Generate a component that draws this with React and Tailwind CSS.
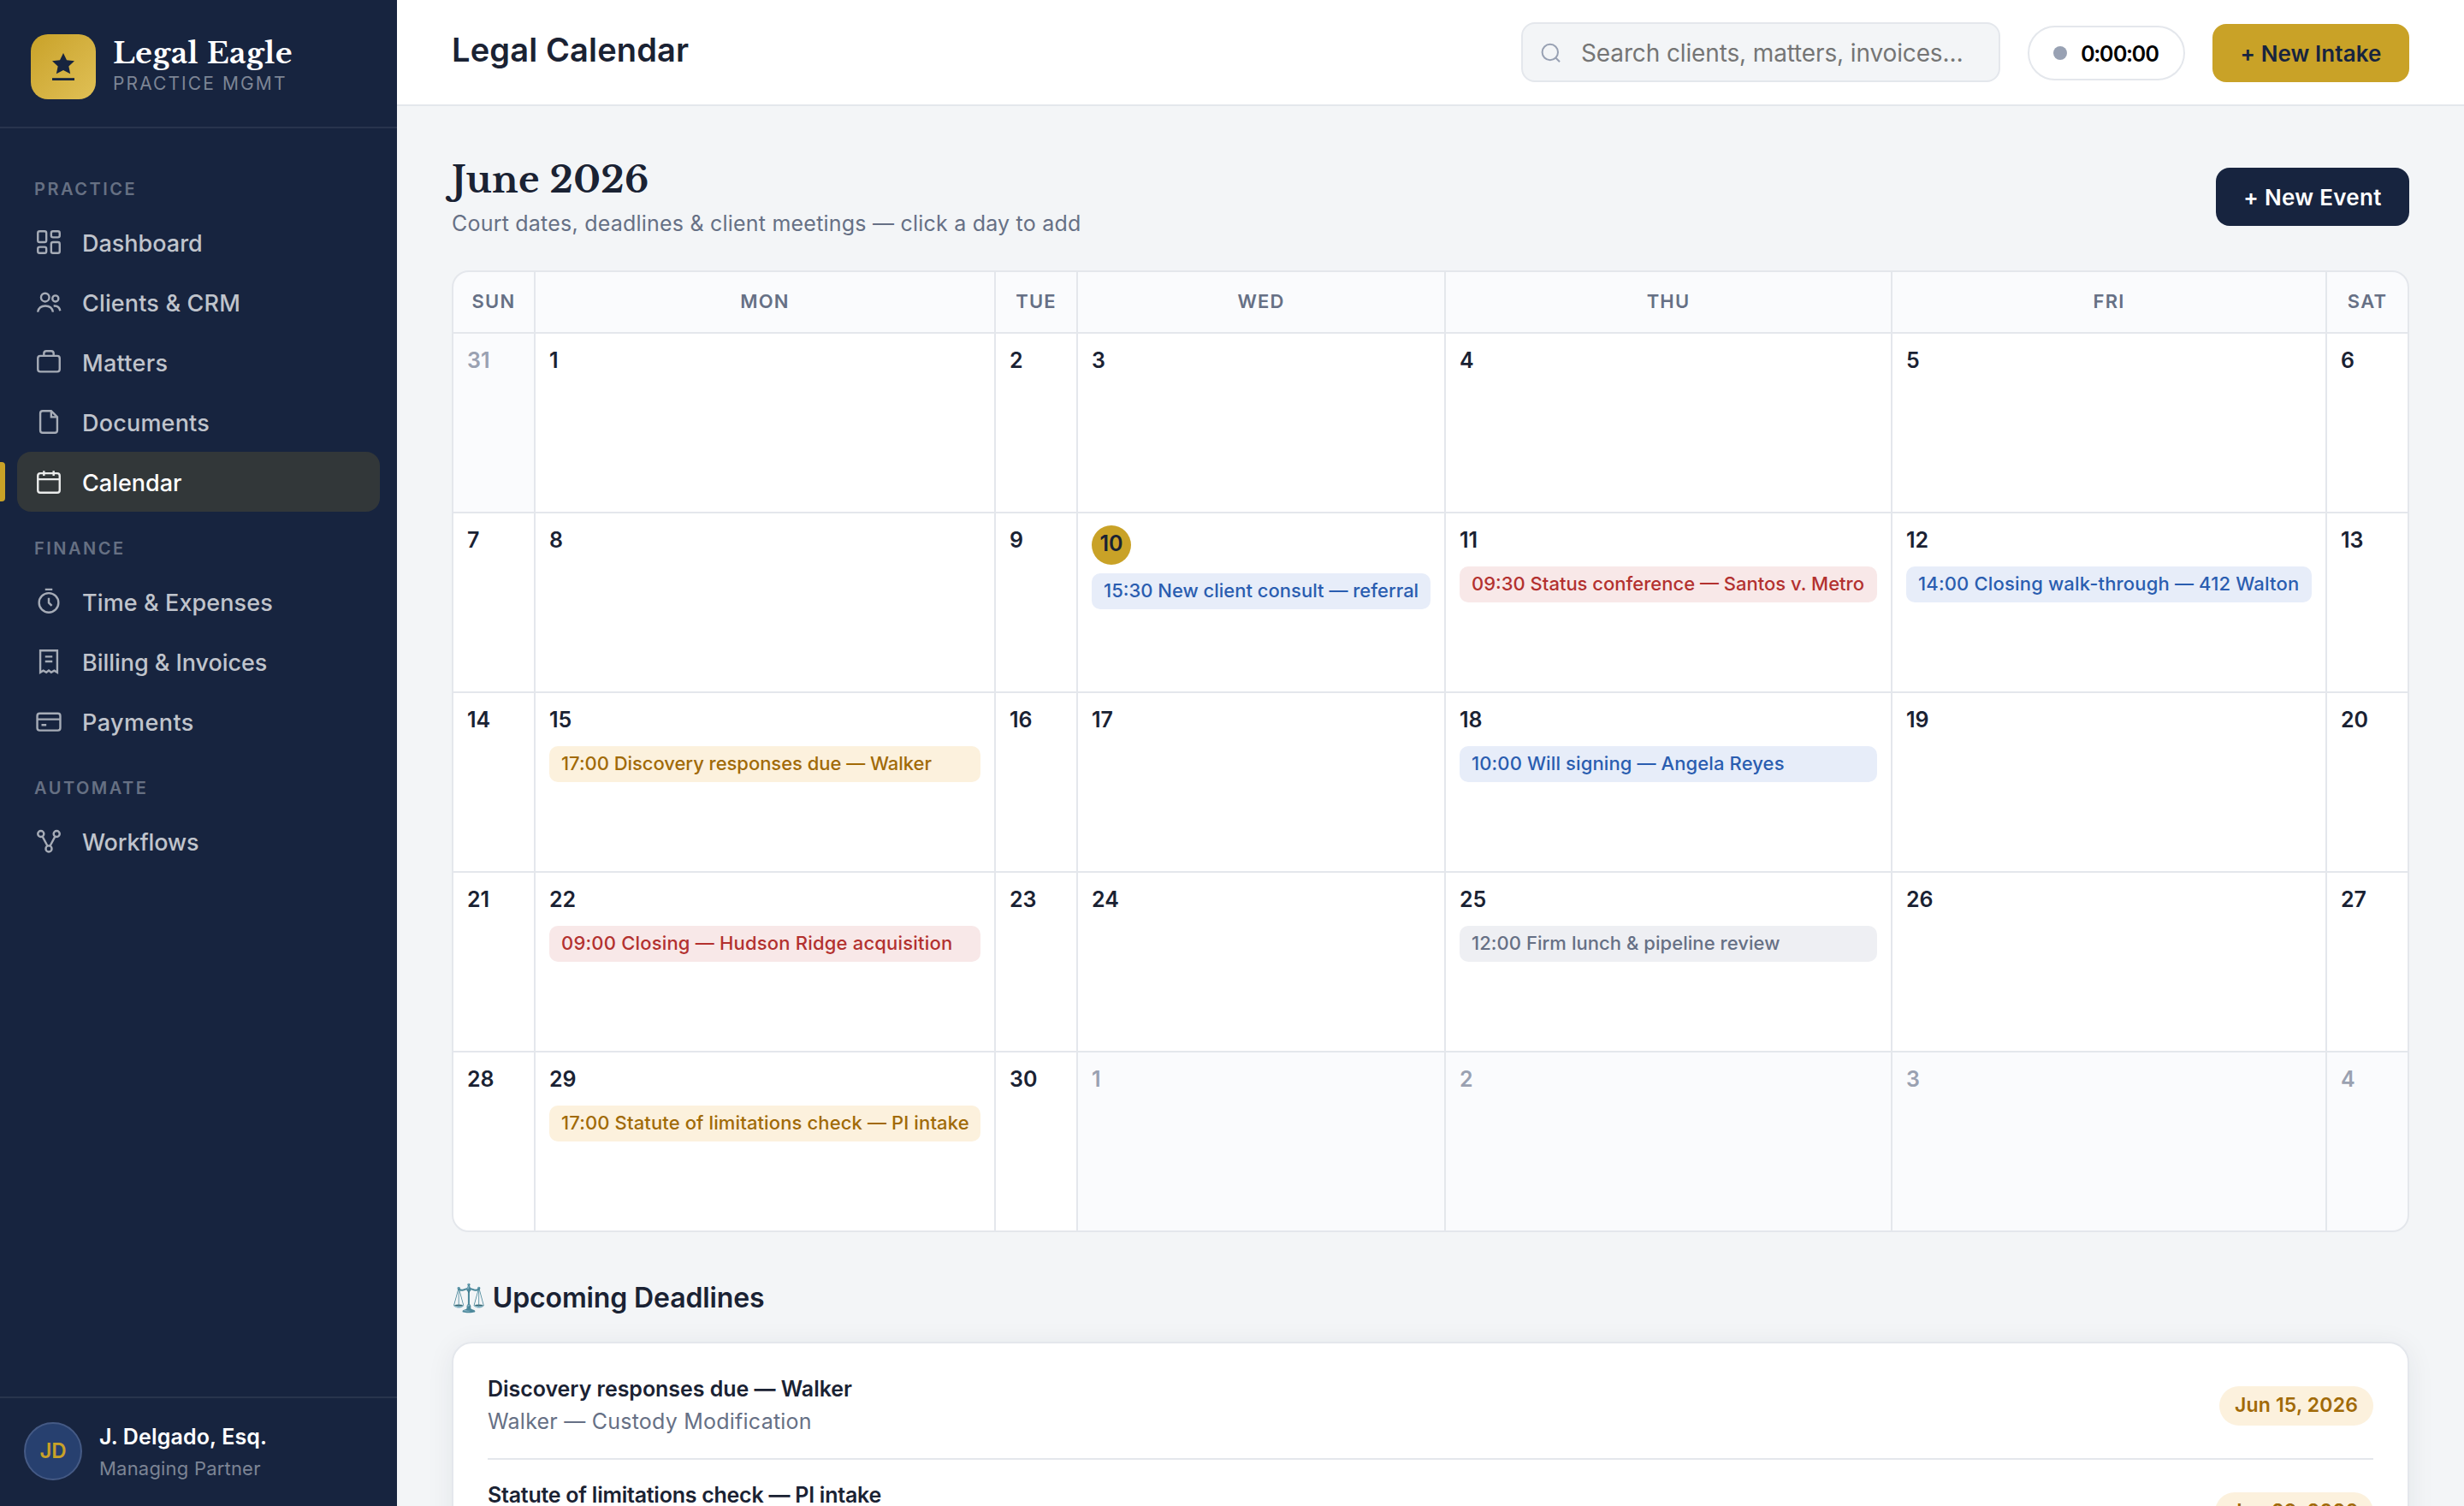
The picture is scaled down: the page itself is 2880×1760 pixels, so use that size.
import React from "react";

const INK = "text-[#1a2233]";

function NavIcon({ children, active }) {
  return (
    <svg
      viewBox="0 0 24 24"
      className={"size-[34px] shrink-0 " + (active ? "opacity-90" : "opacity-85")}
      fill="none"
      stroke="currentColor"
      strokeWidth="1.7"
    >
      {children}
    </svg>
  );
}

const icons = {
  dashboard: (
    <>
      <rect x="3" y="3" width="7" height="9" rx="1.5" />
      <rect x="14" y="3" width="7" height="5" rx="1.5" />
      <rect x="14" y="12" width="7" height="9" rx="1.5" />
      <rect x="3" y="16" width="7" height="5" rx="1.5" />
    </>
  ),
  clients: (
    <>
      <circle cx="9" cy="8.2" r="3.400" />
      <path d="M2.900 20.200c.6-3.200 3-5 6.300-5s5.700 1.800 6.300 5" />
      <circle cx="17.500" cy="9.100" r="2.500" />
      <path d="M16 15.200c2.900-.3 4.900 1.100 5.400 4" />
    </>
  ),
  matters: (
    <>
      <rect x="3" y="7" width="18" height="13" rx="2" />
      <path d="M8 7V5a2 2 0 0 1 2-2h4a2 2 0 0 1 2 2v2" />
    </>
  ),
  documents: (
    <>
      <path d="M14 3H7a2 2 0 0 0-2 2v14a2 2 0 0 0 2 2h10a2 2 0 0 0 2-2V8z" />
      <path d="M14 3v5h5" />
    </>
  ),
  calendar: (
    <>
      <rect x="3" y="5" width="18" height="16" rx="2" />
      <path d="M3 10h18M8 3v4M16 3v4" />
    </>
  ),
  time: (
    <>
      <circle cx="12" cy="13" r="8" />
      <path d="M12 9v4l2.500 2.500M9 2h6" />
    </>
  ),
  billing: (
    <path d="M5 3h14v18l-2.500-1.500L14 21l-2-1.500L10 21l-2.500-1.500L5 21zM9 8h6M9 12h6" />
  ),
  payments: (
    <>
      <rect x="2.500" y="5.500" width="19" height="14" rx="2" />
      <path d="M2.500 10.300h19M6 15h4" />
    </>
  ),
  workflows: (
    <>
      <circle cx="5.500" cy="6" r="2.500" />
      <circle cx="18.500" cy="6" r="2.500" />
      <circle cx="12" cy="18.300" r="2.500" />
      <path d="M6.800 8.200l4.100 7.700M17.200 8.200l-4.100 7.700" />
    </>
  ),
};

const nav = [
  {
    label: "Practice",
    tracking: "tracking-[2.500px]",
    items: [
      ["dashboard", "Dashboard", "tracking-[0px]"],
      ["clients", "Clients & CRM", "tracking-[0.150px]"],
      ["matters", "Matters", "tracking-[0.300px]"],
      ["documents", "Documents", "tracking-[0.200px]"],
      ["calendar", "Calendar", "tracking-[0px]"],
    ],
  },
  {
    label: "Finance",
    tracking: "tracking-[2.500px]",
    items: [
      ["time", "Time & Expenses", "tracking-[0.100px]"],
      ["billing", "Billing & Invoices", "tracking-[-0.050px]"],
      ["payments", "Payments", "tracking-[0.450px]"],
    ],
  },
  { label: "Automate", tracking: "tracking-[2.500px]", items: [["workflows", "Workflows", "tracking-[-0.150px]"]] },
];

function Sidebar() {
  return (
    <aside className="flex w-[464px] shrink-0 flex-col bg-[#17243f]">
      <div className="flex h-[150px] items-start gap-[20px] border-b-2 border-[#28344d] pt-[40px] pl-[36px]">
        <div className="flex size-[76px] items-center justify-center rounded-[20px] bg-linear-135 from-[#c9a227] to-[#e0c055]">
          <svg viewBox="0 0 24 24" className="size-[40px]" fill="#17243f">
            <path d="M12 2.400l2.400 5 5.400.6-4 3.700 1.100 5.200-4.900-2.500-4.900 2.500 1.100-5.200-4-3.700 5.400-.6z" />
            <rect x="4.200" y="19.900" width="15.600" height="1.700" />
          </svg>
        </div>
        <div className="flex flex-col">
          <div className="font-['Libre_Baskerville','Liberation_Serif',serif] text-[34px]/[44px] font-bold tracking-[0.450px] whitespace-nowrap text-white">Legal Eagle</div>
          <div className="text-[21px]/[28px] tracking-[2.100px] whitespace-nowrap text-[#7d8595]">PRACTICE MGMT</div>
        </div>
      </div>
      <nav className="flex flex-1 flex-col px-[20px] pt-[28px]">
        {nav.map(({ label, tracking: labelTracking, items }) => (
          <div key={label}>
            <div className={"h-[70px] pt-[28px] pl-[20px] text-[20px]/[30px] font-semibold text-[#667083] uppercase " + labelTracking}>{label}</div>
            {items.map(([icon, name, tracking]) => {
              const active = name === "Calendar";
              return (
                <div
                  key={name}
                  className={
                    "relative flex h-[70px] items-center gap-[22px] rounded-[16px] pl-[20px] text-[27px] font-medium " +
                    (active ? "bg-[#323739] text-white" : "text-[#c0c4cc]")
                  }
                >
                  {active && <span className="absolute top-[12px] -left-[20px] h-[46px] w-[6px] rounded-r-[4px] bg-[#c9a227]" />}
                  <NavIcon active={active}>{icons[icon]}</NavIcon>
                  <span className={"mt-[4px] " + tracking}>{name}</span>
                </div>
              );
            })}
          </div>
        ))}
      </nav>
      <div className="flex h-[128px] gap-[20px] border-t-2 border-[#28344d] pt-[26px] pl-[28px]">
        <div className="mt-[2px] flex size-[68px] items-center justify-center rounded-full border-2 border-[#455a85] bg-[#27406f] text-[24px] font-semibold text-[#c9a227]">JD</div>
        <div className="flex flex-col">
          <div className="text-[25px]/[38px] font-semibold tracking-[0.150px] text-white">J. Delgado, Esq.</div>
          <div className="text-[22px]/[36px] tracking-[0.200px] text-[#7d8595]">Managing Partner</div>
        </div>
      </div>
    </aside>
  );
}

function TopBar() {
  return (
    <header className="flex h-[124px] shrink-0 items-center justify-between border-b-2 border-[#e4e7ec] bg-white px-[64px]">
      <h1 className={"pb-[6px] text-[38px] font-semibold tracking-[0.150px] " + INK}>Legal Calendar</h1>
      <div className="flex items-center gap-[32px]">
        <div className="flex h-[70px] w-[560px] items-center gap-[22px] rounded-[16px] border-2 border-[#e4e7ec] bg-[#f3f5f7] pl-[18px] text-[28px] tracking-[-0.130px] text-[#757575]">
          <svg viewBox="0 0 28 28" className="size-[28px]" fill="none" stroke="#98a1b3" strokeWidth="2">
            <circle cx="13.800" cy="14" r="9.200" />
            <path d="M20.300 20.500l4.700 4.700" />
          </svg>
          <span className="mt-[2px]">Search clients, matters, invoices…</span>
        </div>
        <div className="mt-[2px] flex h-[64px] w-[184px] items-center gap-[16px] rounded-full border-2 border-[#e4e7ec] bg-white pl-[28px] text-[26px] font-semibold text-black tabular-nums">
          <span className="size-[16px] rounded-full bg-[#98a1b3]" />
          <span className="tracking-[-1px]">0:00:00</span>
        </div>
        <button className="mt-[2px] h-[68px] w-[230px] rounded-[16px] bg-[#c9a227] text-[26px] font-semibold tracking-[0.080px] text-[#17243f]">+ New Intake</button>
      </div>
    </header>
  );
}

const tones = {
  blue: "bg-[#e7edf9] text-[#2a5db0]",
  red: "bg-[#f8e8e8] text-[#b3312f]",
  amber: "bg-[#fcf1dd] text-[#a16a07]",
  gray: "bg-[#eeeff3] text-[#667085]",
};

const events = {
  10: ["blue", "15:30 New client consult — referral", "tracking-[0px]"],
  11: ["red", "09:30 Status conference — Santos v. Metro", "tracking-[0px]"],
  12: ["blue", "14:00 Closing walk-through — 412 Walton", "tracking-[0.170px]"],
  15: ["amber", "17:00 Discovery responses due — Walker", "tracking-[-0.040px]"],
  18: ["blue", "10:00 Will signing — Angela Reyes", "tracking-[0.110px]"],
  22: ["red", "09:00 Closing — Hudson Ridge acquisition", "tracking-[0.190px]"],
  25: ["gray", "12:00 Firm lunch & pipeline review", "tracking-[0.050px]"],
  29: ["amber", "17:00 Statute of limitations check — PI intake", "tracking-[0.120px]"],
};

const days = [
  { n: 31, out: true },
  ...Array.from({ length: 30 }, (_, i) => ({ n: i + 1 })),
  ...[1, 2, 3, 4].map((n) => ({ n, out: true })),
];

function Day({ n, out }) {
  const event = out ? null : events[n];
  const today = n === 10 && !out;
  return (
    <div className={"h-[208px] px-[16px] pt-[14px] text-[25px]/[34px] font-semibold " + (out ? "bg-[#fafbfd] text-[#9aa1b1]" : "bg-white " + INK)}>
      {today ? (
        <div className="mb-[10px] size-[46px] rounded-full bg-[#c9a227] pt-[4px] text-center">{n}</div>
      ) : (
        <div className="mb-[10px] h-[38px]">{n}</div>
      )}
      {event && (
        <div className={"h-[42px] rounded-[10px] px-[14px] text-[22px]/[41px] font-medium whitespace-nowrap " + tones[event[0]] + " " + event[2]}>{event[1]}</div>
      )}
    </div>
  );
}

function Calendar() {
  return (
    <div className="grid grid-cols-[94px_536px_94px_428px_520px_506px_94px] gap-[2px] overflow-hidden rounded-[20px] border-2 border-[#e4e7ec] bg-[#e4e7ec]">
      {["Sun", "Mon", "Tue", "Wed", "Thu", "Fri", "Sat"].map((d) => (
        <div key={d} className="h-[70px] bg-[#fafbfd] text-center text-[22px]/[68px] font-semibold tracking-[1.200px] text-[#667085] uppercase">{d}</div>
      ))}
      {days.map((d, i) => (
        <Day key={i} {...d} />
      ))}
    </div>
  );
}

const deadlines = [
  ["Discovery responses due — Walker", "Walker — Custody Modification", "Jun 15, 2026", "tracking-[-0.040px]"],
  ["Statute of limitations check — PI intake", "PI Intake", "Jun 29, 2026", "tracking-[-0.250px]"],
];

export default function App() {
  return (
    <div className="flex h-[1760px] w-[2880px] overflow-hidden bg-[#f3f5f7] font-['Inter',sans-serif]">
      <Sidebar />
      <div className="flex min-w-0 flex-1 flex-col">
        <TopBar />
        <main className="flex flex-col px-[64px]">
          <div className="flex h-[192px] items-start justify-between pt-[56px]">
            <div>
              <h2 className={"pt-[2px] font-['Libre_Baskerville','Liberation_Serif',serif] text-[42px]/[56px] font-bold tracking-[0.400px] " + INK}>June 2026</h2>
              <p className="mt-[3px] text-[25px]/[40px] tracking-[0.215px] text-[#667085]">Court dates, deadlines &amp; client meetings — click a day to add</p>
            </div>
            <button className="mt-[16px] h-[68px] w-[226px] rounded-[16px] bg-[#17243f] text-[26px] font-semibold tracking-[0.300px] text-white">+ New Event</button>
          </div>
          <Calendar />
          <h3 className={"mt-[52px] h-[76px] text-[32px]/[50px] font-semibold tracking-[-0.130px] " + INK}>⚖️ Upcoming Deadlines</h3>
          <section className="h-[400px] rounded-[24px] border-2 border-[#e4e7ec] bg-white px-[40px] pt-[12px] shadow-[0_4px_32px_rgba(23,36,63,0.070)]">
            {deadlines.map(([title, sub, date, tracking]) => (
              <div key={title} className="flex h-[124px] items-center justify-between border-b-2 border-[#e4e7ec]">
                <div className="pb-[2px]">
                  <div className={"text-[25px]/[38px] font-semibold " + tracking + " " + INK}>{title}</div>
                  <div className="text-[25px]/[38px] tracking-[0.230px] text-[#667085]">{sub}</div>
                </div>
                <span className="h-[46px] rounded-full bg-[#fcf1dd] px-[18px] text-[23px]/[44px] font-semibold tracking-[0.150px] text-[#a16a07]">{date}</span>
              </div>
            ))}
          </section>
        </main>
      </div>
    </div>
  );
}
